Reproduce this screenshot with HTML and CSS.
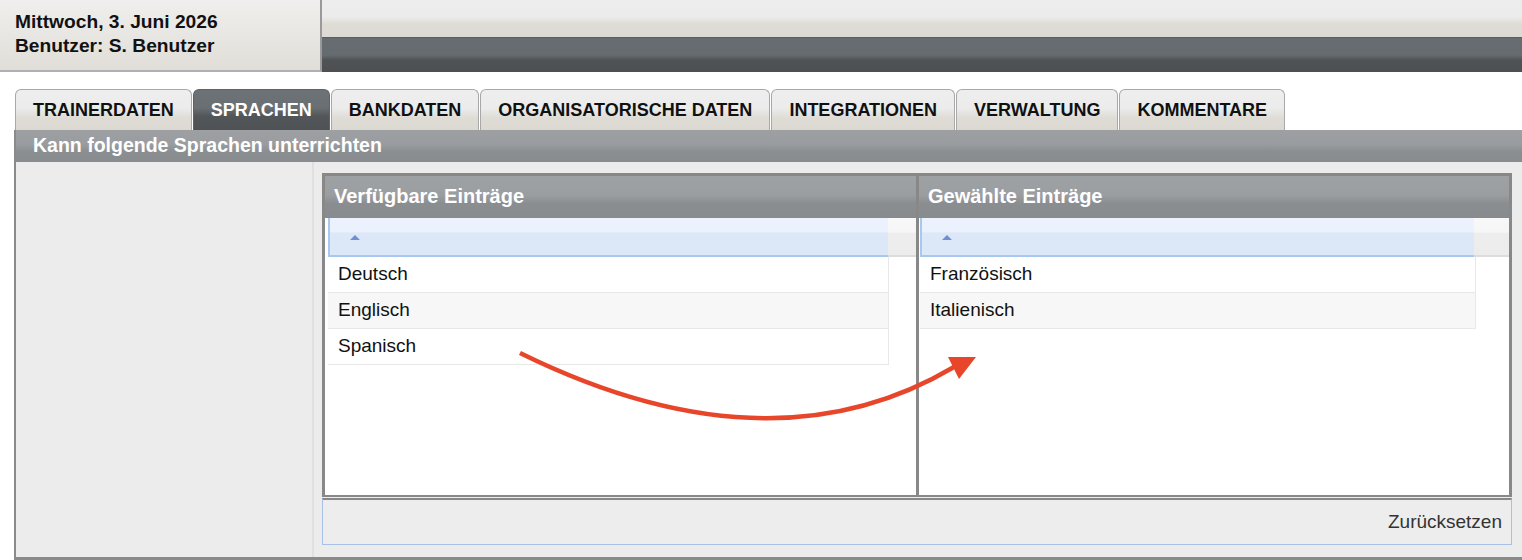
FILE: index.html
```html
<!DOCTYPE html>
<html lang="de">
<head>
  <meta charset="UTF-8">
  <title>Trainer - Sprachen</title>
  <link rel="stylesheet" href="styles.css">
</head>
<body>

  <div class="topbar">
    <div class="userbox">
      <div>Mittwoch, 3. Juni 2026</div>
      <div>Benutzer: S. Benutzer</div>
    </div>
    <div class="topright">
      <div class="top-light"></div>
      <div class="top-dark"></div>
    </div>
  </div>

  <div class="page">
    <ul class="tabs">
      <li class="tab">TRAINERDATEN</li>
      <li class="tab active">SPRACHEN</li>
      <li class="tab">BANKDATEN</li>
      <li class="tab">ORGANISATORISCHE DATEN</li>
      <li class="tab">INTEGRATIONEN</li>
      <li class="tab">VERWALTUNG</li>
      <li class="tab">KOMMENTARE</li>
    </ul>

    <div class="panel">
      <div class="section-title">Kann folgende Sprachen unterrichten</div>
      <div class="content">
        <div class="sidebar"></div>
        <div class="main">
          <div class="picklist">
            <div class="pick-col left">
              <div class="col-head">Verfügbare Einträge</div>
              <div class="col-body">
                <div class="list-head">
                  <div class="sort"><span class="arrow-up"></span></div>
                  <div class="gutter"></div>
                </div>
                <div class="list">
                  <div class="row">Deutsch</div>
                  <div class="row alt">Englisch</div>
                  <div class="row">Spanisch</div>
                </div>
              </div>
            </div>
            <div class="pick-col right">
              <div class="col-head">Gewählte Einträge</div>
              <div class="col-body">
                <div class="list-head">
                  <div class="sort"><span class="arrow-up"></span></div>
                  <div class="gutter"></div>
                </div>
                <div class="list">
                  <div class="row">Französisch</div>
                  <div class="row alt">Italienisch</div>
                </div>
              </div>
            </div>
          </div>
          <div class="buttonbar">
            <span class="reset">Zurücksetzen</span>
          </div>
        </div>
      </div>
    </div>
  </div>

  <!-- hint arrow drawn over the lists -->
  <svg class="hint" width="1522" height="560" viewBox="0 0 1522 560">
    <path d="M520 353 Q 770 476 954 367" fill="none" stroke="#e8462a" stroke-width="4.5"/>
    <polygon points="948,357 976,357 959,379" fill="#e8462a"/>
  </svg>

</body>
</html>
```

FILE: styles.css
```css
body {
  margin: 0;
  font-family: "Liberation Sans", Arial, sans-serif;
  font-size: 19px;
  background: white;
  position: relative;
  width: 1522px;
  height: 560px;
  overflow: hidden;
}

.topbar {
  display: flex;
  height: 72px;
}

.userbox {
  width: 322px;
  padding: 10px 0 0 15px;
  line-height: 24px;
  font-size: 19.2px;
  font-weight: bold;
  color: #111;
  background: linear-gradient(#efefed, #e1ded8);
  border-right: 2px solid #9a9a9a;
  border-bottom: 2px solid #b0b0b0;
  box-sizing: border-box;
}

.topright {
  flex: 1;
  display: flex;
  flex-direction: column;
}

.top-light {
  height: 37px;
  background: linear-gradient(#ededed 0%, #ececec 45%, #dfdcd6 65%, #dddad4 100%);
  border-bottom: 1px solid #5a5e61;
}

.top-dark {
  flex: 1;
  background: linear-gradient(#666c70 0%, #656b6f 50%, #4f5356 65%, #4c5053 100%);
}

.page {
  margin-top: 17px;
  padding-left: 14px;
}

.tabs {
  list-style: none;
  margin: 0;
  padding: 0 0 0 1px;
  display: flex;
  gap: 1px;
}

.tab {
  padding: 1px 17px 0 17px;
  line-height: 39px;
  font-size: 18px;
  font-weight: bold;
  color: #111;
  border: 1px solid #a8a8a8;
  border-bottom: none;
  border-radius: 6px 6px 0 0;
  background: linear-gradient(#eeeeee 0%, #ececec 45%, #dfdcd6 70%, #dcd9d3 100%);
}

.tab.active {
  color: white;
  border-color: #5e6366;
  background: linear-gradient(#6c7276 0%, #696f73 45%, #525659 65%, #4e5255 100%);
}

.panel {
  border-left: 2px solid #8a8a8a;
  border-bottom: 3px solid #8a8a8a;
  background: #ececec;
}

.section-title {
  height: 32px;
  line-height: 31px;
  padding-left: 17px;
  font-size: 19.5px;
  font-weight: bold;
  color: white;
  background: linear-gradient(#9d9fa2 0%, #9a9da0 45%, #8c8f92 65%, #898c8f 100%);
}

.content {
  display: flex;
  height: 395px;
}

.sidebar {
  width: 296px;
  border-right: 2px solid #e0e0e0;
}

.main {
  flex: 1;
  padding: 11px 10px 0 8px;
}

.picklist {
  display: flex;
  height: 324px;
  border: 3px solid #888;
  border-bottom-width: 2px;
  box-sizing: border-box;
  background: #888;
  gap: 3px;
}

.pick-col {
  display: flex;
  flex-direction: column;
}

.pick-col.left {
  width: 591px;
}

.pick-col.right {
  flex: 1;
}

.col-head {
  height: 42px;
  line-height: 41px;
  padding-left: 9px;
  font-size: 20px;
  font-weight: bold;
  color: white;
  background: linear-gradient(#9fa2a5 0%, #9b9ea1 45%, #8b8e91 65%, #888b8e 100%);
}

.col-body {
  flex: 1;
  background: white;
  padding-left: 3px;
}

.right .col-body {
  padding-left: 1px;
}

.list-head {
  display: flex;
  height: 39px;
}

.sort {
  flex: 1;
  border-left: 2px solid #a9c8f1;
  border-bottom: 2px solid #a9c8f1;
  background: linear-gradient(#ebf2fd 0%, #ebf2fd 38%, #dce7f8 40%, #dce7f8 100%);
  position: relative;
}

.gutter {
  width: 28px;
  border-bottom: 2px solid #dcdcdc;
  background: linear-gradient(#f8f8f8 0%, #f6f6f6 38%, #ededed 42%, #ececec 100%);
}

.right .gutter {
  width: 35px;
}

.arrow-up {
  position: absolute;
  left: 20px;
  top: 17px;
  border-left: 5px solid transparent;
  border-right: 5px solid transparent;
  border-bottom: 5px solid #6f8fcf;
}

.list {
  margin-right: 27px;
}

.right .list {
  margin-right: 33px;
}

.row {
  height: 35px;
  line-height: 34px;
  padding-left: 10px;
  color: #111;
  border-bottom: 1px solid #e8e8e8;
  border-right: 1px solid #e8e8e8;
}

.row.alt {
  background: #f7f7f7;
}

.buttonbar {
  margin-top: 1px;
  height: 44px;
  line-height: 43px;
  text-align: right;
  padding-right: 9px;
  background: #ededed;
  border: 1px solid #a8c0e8;
  border-top: 2px solid #888;
}

.reset {
  color: #333;
}

.hint {
  position: absolute;
  left: 0;
  top: 0;
  pointer-events: none;
}
```
